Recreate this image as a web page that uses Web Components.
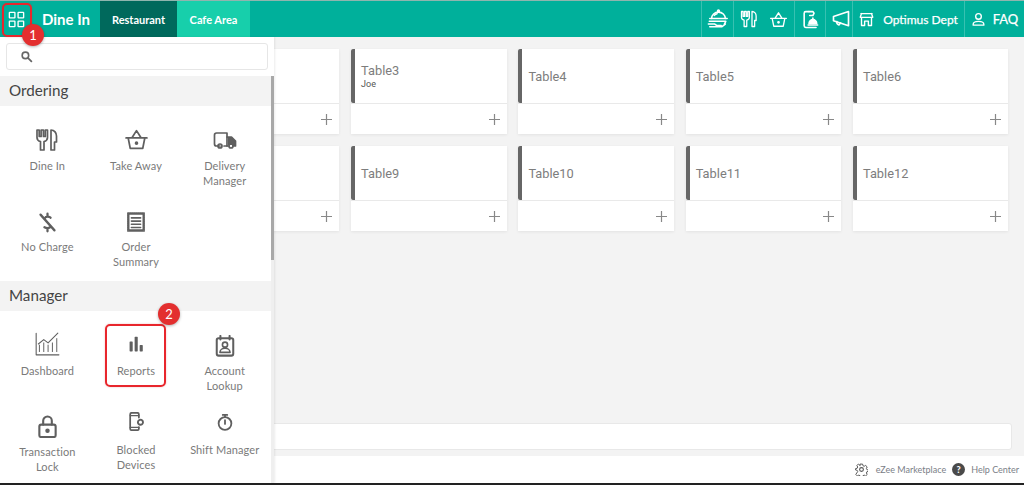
<!DOCTYPE html>
<html lang="en">
<head>
<meta charset="utf-8">
<title>Dine In</title>
<style>
  html, body { margin: 0; height: 485px; overflow: hidden; }
  body {
    position: relative;
    display: flex;
    flex-direction: column;
    background: #f3f3f3;
    font-family: "Lato", "Open Sans", sans-serif;
    box-sizing: border-box;
    border-bottom: 2px solid #222;
  }
</style>
</head>
<body>
<app-header>
  <nav-tab active style="width:77px">Restaurant</nav-tab>
  <nav-tab style="width:73px">Cafe Area</nav-tab>
  <head-cell slot="tools" style="width:32px"><app-icon name="cloche" size="22"></app-icon></head-cell>
  <head-cell slot="tools" style="width:61px;gap:11px"><app-icon name="dinein" size="18"></app-icon><app-icon name="basket" size="19"></app-icon></head-cell>
  <head-cell slot="tools" style="width:31px"><app-icon name="phonebell" size="19"></app-icon></head-cell>
  <head-cell slot="tools" style="width:27px;padding-left:3px"><app-icon name="megaphone" size="20"></app-icon></head-cell>
  <head-cell slot="tools" style="width:112px;gap:9px;font-size:12px"><app-icon name="store" size="15"></app-icon>Optimus Dept</head-cell>
  <head-cell slot="tools" style="width:60px;gap:7px"><app-icon name="user" size="15"></app-icon>FAQ</head-cell>
</app-header>

<table-floor>
  <table-card></table-card>
  <table-card></table-card>
  <table-card name="Table3" guest="Joe"></table-card>
  <table-card name="Table4"></table-card>
  <table-card name="Table5"></table-card>
  <table-card name="Table6"></table-card>
  <table-card></table-card>
  <table-card></table-card>
  <table-card name="Table9"></table-card>
  <table-card name="Table10"></table-card>
  <table-card name="Table11"></table-card>
  <table-card name="Table12"></table-card>
</table-floor>

<app-footer></app-footer>

<side-menu>
  <menu-section title="Ordering">
    <menu-item icon="dinein" size="24">Dine In</menu-item>
    <menu-item icon="basket" size="25">Take Away</menu-item>
    <menu-item icon="truck" size="24">Delivery Manager</menu-item>
    <menu-item icon="nocharge" size="21">No Charge</menu-item>
    <menu-item icon="receipt" size="22">Order Summary</menu-item>
  </menu-section>
  <menu-section title="Manager">
    <menu-item icon="chart" size="26">Dashboard</menu-item>
    <menu-item icon="bars" size="22">Reports</menu-item>
    <menu-item icon="account" size="22">Account Lookup</menu-item>
    <menu-item icon="lock" size="23">Transaction Lock</menu-item>
    <menu-item icon="device" size="19" lift>Blocked Devices</menu-item>
    <menu-item icon="watch" size="18" lift wide>Shift Manager</menu-item>
  </menu-section>
</side-menu>

<call-out n="1" style="--x:2px;--y:3px;--w:30px;--h:34px;--bx:33px;--by:35px"></call-out>
<call-out n="2" style="--x:105px;--y:324px;--w:61px;--h:63px;--bx:169px;--by:314px"></call-out>

<script>
const ICONS = {
  grid: '<rect x="3" y="3" width="7" height="7" rx=".6"/><rect x="14" y="3" width="7" height="7" rx=".6"/><rect x="3" y="14" width="7" height="7" rx=".6"/><rect x="14" y="14" width="7" height="7" rx=".6"/>',
  search: '<circle cx="10" cy="10" r="6" stroke-width="3"/><path d="M15 15l6 6" stroke-width="3.4"/>',
  cloche: '<path d="M5 11.500a7.500 7 0 0 1 15 0"/><circle cx="12.500" cy="3.200" r="1"/><path d="M3 11.500h19M8 8c.8-1 1.800-1.600 3-1.800M2.500 14.500h18l-1.500 3M1.500 17.500h7l2 1.500h5M3 20.500h13l4-3"/>',
  dinein: '<path d="M2 2v7.500c0 2 1.500 3.500 3.500 4V22H9v-8.500c2-.5 3.500-2 3.500-4V2h-2.200v6.500H8.400V2H6.100v6.500H4.200V2z"/><path d="M16 2v20h3.500v-8h2V8c0-3-2-6-5.500-6z"/>',
  basket: '<path d="M2 10.500h20M4 10.500l2 10h12l2-10M7.500 10.500L12 3.500l4.500 7"/><circle cx="12" cy="15.500" r=".9" fill="currentColor"/>',
  truck: '<path d="M7 18H3.500A2 2 0 0 1 1.500 16V7a2 2 0 0 1 2-2H14v13h-3"/><circle cx="7" cy="18" r="2"/><circle cx="18" cy="18" r="2"/><path d="M14 9h4.500l4 4v5h-2.500M15.500 18H14" fill="currentColor"/><path d="M15 10h3.500l3 3.500v3.500h-6.500z" fill="currentColor" stroke="none"/>',
  nocharge: '<path d="M4 3l16 18" stroke-width="2.600"/><path d="M15.500 6.500C14.500 5 10 4.500 9 7M15 17.500c-1.500 1-4 1.500-6.500 0M12 2v3M12 19v3" stroke-width="2.600"/>',
  receipt: '<path d="M3 2h18v20H3z" stroke-dasharray="1.500 .7" stroke-width="1.400"/><path d="M4 3.200h16v17.600H4zM7 7.500h10M7 11h10M7 14.500h10M7 18h10" stroke-width="1.800"/>',
  chart: '<path d="M2 2v20h21" stroke-width="1"/><path d="M5 19v-6M9 19v-8M13 19v-6M17 19v-8M21 19V7" stroke-width=".9"/><path d="M4 12l5-4 4 3 9-9" stroke-width="1"/>',
  bars: '<rect x="5" y="7" width="3.400" height="11" rx=".7" fill="currentColor" stroke="none"/><rect x="10.500" y="2" width="3.400" height="16" rx=".7" fill="currentColor" stroke="none"/><rect x="16" y="11" width="3.400" height="7" rx=".7" fill="currentColor" stroke="none"/>',
  account: '<rect x="3" y="3.500" width="18" height="19" rx="2" stroke-width="2.200"/><path d="M7 1v4M17 1v4" stroke-width="2.200"/><circle cx="12" cy="10.500" r="2.800" stroke-width="1.800"/><path d="M6.500 19c0-6 11-6 11 0z" stroke-width="1.800"/>',
  lock: '<rect x="3.500" y="10" width="17" height="13" rx="2" stroke-width="2.200"/><path d="M7.500 10V6a4.500 4.500 0 0 1 9 0v4" stroke-width="2.200"/><circle cx="12" cy="16.500" r="1.500" fill="currentColor"/>',
  device: '<path d="M15 7V3a2 2 0 0 0-2-2H6a2 2 0 0 0-2 2v18a2 2 0 0 0 2 2h7a2 2 0 0 0 2-2v-2" stroke-width="2.200"/><path d="M4 4.500h11M4 19.500h11" stroke-width="1.500"/><circle cx="17" cy="13" r="3.200" stroke-width="2.400" stroke-dasharray="2 .8"/>',
  watch: '<circle cx="12" cy="14" r="8.500" stroke-width="2.400"/><path d="M9 2.500h6M12 2.500v3M12 9.500v5" stroke-width="2.400"/>',
  phonebell: '<path d="M10 2H6a2 2 0 0 0-2 2v16a2 2 0 0 0 2 2h13" stroke-width="2"/><path d="M10 2h5l1.500 2-1.500 3h-4" stroke-width="2"/><path d="M10 17a5 5 0 0 1 10 0z" fill="currentColor"/><path d="M9 19h12M15 10v2" stroke-width="2"/>',
  megaphone: '<path d="M3 9v5l18 6V3z" stroke-width="2"/><path d="M7 15c-.5 2 .5 3.500 2.500 4l2-2.200" stroke-width="2"/>',
  store: '<path d="M3 2.500h18M2 8.500h20M4 2.500L2 8.500M20 2.500l2 6M4 8.500V21.500h5v-7h6v7h5v-13" stroke-width="2.200"/>',
  user: '<circle cx="12" cy="7" r="4.500" stroke-width="2.200"/><path d="M3.500 21v-1.500c0-3 3-4.500 8.500-4.500s8.500 1.500 8.500 4.500V21z" stroke-width="2.200"/>',
  gear: '<circle cx="12" cy="12" r="3.500" stroke-width="2"/><path d="M10 2h4l.7 3 2.300 1 2.700-1.500 2.800 2.800-1.500 2.700 1 2.300 3 .7v2.400l-3 .7-1 2.300 1.500 2.700-2.800 2.800-2.700-1.500-2.300 1-.7 3h-4l-.7-3-2.300-1-2.700 1.500-2.800-2.800L5 15.800l-1-2.300-3-.7v-2.400l3-.7 1-2.300-1.500-2.700 2.800-2.800L9 4.500z" stroke-width="1.800"/>'
};

class AppIcon extends HTMLElement {
  connectedCallback() {
    const size = this.getAttribute("size") || 24;
    const root = this.shadowRoot || this.attachShadow({ mode: "open" });
    root.innerHTML = `
      <style>
        :host { display: inline-flex; line-height: 0; flex: none; }
        svg { fill: none; stroke: currentColor; stroke-width: 1.7; stroke-linejoin: round; stroke-linecap: round; }
      </style>
      <svg width="${size}" height="${size}" viewBox="0 0 24 24">${ICONS[this.getAttribute("name")] || ""}</svg>`;
  }
}
customElements.define("app-icon", AppIcon);

class AppHeader extends HTMLElement {
  constructor() {
    super();
    this.attachShadow({ mode: "open" }).innerHTML = `
      <style>
        :host {
          display: flex;
          flex: none;
          box-sizing: border-box;
          height: 37px;
          background: #00b09b;
          border-top: 1px solid #8fb5ae;
          color: #fff;
        }
        .menu { display: flex; align-items: center; justify-content: center; width: 33px; }
        .title { display: flex; align-items: center; width: 67px; padding-left: 9px; box-sizing: border-box; font-size: 15px; font-weight: 700; }
        .tabs { display: flex; }
        .tools { display: flex; margin-left: auto; }
      </style>
      <div class="menu"><app-icon name="grid" size="19"></app-icon></div>
      <div class="title">Dine In</div>
      <div class="tabs"><slot></slot></div>
      <div class="tools"><slot name="tools"></slot></div>`;
  }
}
customElements.define("app-header", AppHeader);

class NavTab extends HTMLElement {
  constructor() {
    super();
    this.attachShadow({ mode: "open" }).innerHTML = `
      <style>
        :host {
          display: flex;
          align-items: center;
          justify-content: center;
          background: #17cfab;
          font-size: 11px;
          font-weight: 700;
        }
        :host([active]) { background: #00695c; }
      </style>
      <slot></slot>`;
  }
}
customElements.define("nav-tab", NavTab);

class HeadCell extends HTMLElement {
  constructor() {
    super();
    this.attachShadow({ mode: "open" }).innerHTML = `
      <style>
        :host {
          display: flex;
          align-items: center;
          justify-content: center;
          box-sizing: border-box;
          gap: 9px;
          border-left: 1px solid rgba(255,255,255,.22);
          font-size: 13px;
          -webkit-text-stroke: .25px #fff;
        }
      </style>
      <slot></slot>`;
  }
}
customElements.define("head-cell", HeadCell);

class TableFloor extends HTMLElement {
  constructor() {
    super();
    this.attachShadow({ mode: "open" }).innerHTML = `
      <style>
        :host {
          display: block;
          flex: 1;
          min-height: 0;
          padding: 12px 0 0 16.500px;
          position: relative;
        }
        .grid { display: grid; grid-template-columns: repeat(6, 155.500px); gap: 12px 11.800px; }
        .note {
          position: absolute;
          left: 17px;
          right: 12px;
          bottom: 6px;
          height: 27px;
          box-sizing: border-box;
          background: #fff;
          border: 1px solid #e8e8e8;
          border-radius: 3px;
        }
      </style>
      <div class="grid"><slot></slot></div>
      <div class="note"></div>`;
  }
}
customElements.define("table-floor", TableFloor);

class TableCard extends HTMLElement {
  constructor() {
    super();
    const name = this.getAttribute("name") || "";
    const guest = this.getAttribute("guest") || "";
    this.attachShadow({ mode: "open" }).innerHTML = `
      <style>
        :host {
          display: block;
          height: 85px;
          background: #fff;
          box-shadow: 0 1px 3px rgba(0,0,0,.07);
          font-family: "Roboto", sans-serif;
        }
        .top {
          box-sizing: border-box;
          height: 54px;
          border-left: 4px solid #666;
          border-radius: 2px 0 0 2px;
          padding-left: 6px;
          display: flex;
          flex-direction: column;
          justify-content: center;
          color: #7d7d7d;
          font-size: 12.800px;
          line-height: 15px;
        }
        .guest { font-size: 9px; color: #555; line-height: 11px; transform: translateY(1px); }
        .bottom {
          box-sizing: border-box;
          height: 31px;
          border-top: 1px solid #e9e9e9;
          display: flex;
          align-items: center;
          justify-content: flex-end;
          padding-right: 7px;
        }
      </style>
      <div class="top"><div>${name}</div>${guest ? `<div class="guest">${guest}</div>` : ""}</div>
      <div class="bottom"><svg width="11" height="11" viewBox="0 0 11 11"><path d="M5.500 0v11M0 5.500h11" stroke="#888" stroke-width="1.200"/></svg></div>`;
  }
}
customElements.define("table-card", TableCard);

class AppFooter extends HTMLElement {
  constructor() {
    super();
    this.attachShadow({ mode: "open" }).innerHTML = `
      <style>
        :host {
          display: flex;
          flex: none;
          align-items: center;
          justify-content: flex-end;
          height: 27px;
          padding-right: 5px;
          background: #fff;
          color: #7b8087;
          font-size: 9px;
        }
        app-icon { color: #555; }
        span { margin: 0 6px 0 8px; }
        .help {
          width: 13px; height: 13px; border-radius: 50%;
          background: #4a4a4a; color: #fff;
          font-size: 9px; font-weight: 900; line-height: 13px; text-align: center;
        }
      </style>
      <app-icon name="gear" size="13"></app-icon>
      <span>eZee Marketplace</span>
      <div class="help">?</div>
      <span style="margin-right:0;margin-left:6px">Help Center</span>`;
  }
}
customElements.define("app-footer", AppFooter);

class SideMenu extends HTMLElement {
  constructor() {
    super();
    this.attachShadow({ mode: "open" }).innerHTML = `
      <style>
        :host {
          position: absolute;
          left: 0;
          top: 37px;
          bottom: 0;
          width: 274px;
          display: flex;
          flex-direction: column;
          overflow: hidden;
          background: #fff;
          box-shadow: 1px 0 2px rgba(0,0,0,.08);
        }
        .search { padding: 6px; flex: none; display: flex; }
        .box {
          flex: 1;
          max-width: 262px;
          height: 27px;
          box-sizing: border-box;
          border: 1px solid #e6e6e6;
          border-radius: 3px;
          display: flex;
          align-items: center;
          padding-left: 13px;
          color: #666;
        }
        .body { flex: 1; min-height: 0; display: flex; }
        .list { flex: 1; min-width: 0; }
        .bar { flex: none; width: 3px; background: #efefef; }
        .thumb { height: 184px; background: #a8a8a8; }
      </style>
      <div class="search"><div class="box"><app-icon name="search" size="13"></app-icon></div></div>
      <div class="body">
        <div class="list"><slot></slot></div>
        <div class="bar"><div class="thumb"></div></div>
      </div>`;
  }
}
customElements.define("side-menu", SideMenu);

class MenuSection extends HTMLElement {
  constructor() {
    super();
    this.attachShadow({ mode: "open" }).innerHTML = `
      <style>
        :host { display: block; }
        h2 {
          margin: 0;
          height: 30px;
          padding-left: 9px;
          background: #f3f3f3;
          color: #444;
          font-size: 15.200px;
          font-weight: 400;
          line-height: 28px;
        }
        .items {
          display: grid;
          grid-template-columns: repeat(3, 88.700px);
          padding: 0 0 13px 3px;
        }
      </style>
      <h2>${this.getAttribute("title")}</h2>
      <div class="items"><slot></slot></div>`;
    this.removeAttribute("title");
  }
}
customElements.define("menu-section", MenuSection);

class MenuItem extends HTMLElement {
  constructor() {
    super();
    this.attachShadow({ mode: "open" }).innerHTML = `
      <style>
        :host {
          display: block;
          box-sizing: border-box;
          height: 81px;
          padding-top: 18px;
          text-align: center;
          color: #7a7a7a;
          font-size: 11px;
          letter-spacing: .1px;
          line-height: 15px;
        }
        .icon { height: 34px; display: flex; align-items: flex-end; justify-content: center; padding-bottom: 6px; box-sizing: border-box; color: #5f5f5f; }
        :host([lift]) .icon { height: 32px; padding-bottom: 11px; }
        .label { padding: 0 14px; }
        :host([wide]) .label { padding: 0; }
      </style>
      <div class="icon"><app-icon name="${this.getAttribute("icon")}" size="${this.getAttribute("size")}"></app-icon></div>
      <div class="label"><slot></slot></div>`;
  }
}
customElements.define("menu-item", MenuItem);

class CallOut extends HTMLElement {
  constructor() {
    super();
    this.attachShadow({ mode: "open" }).innerHTML = `
      <style>
        :host { position: absolute; left: 0; top: 0; }
        .box {
          position: absolute;
          left: var(--x); top: var(--y);
          width: var(--w); height: var(--h);
          box-sizing: border-box;
          border: 2px solid #e8262c;
          border-radius: 5px;
          box-shadow: 0 0 2px rgba(200,30,30,.3);
        }
        .dot {
          position: absolute;
          left: calc(var(--bx) - 11px); top: calc(var(--by) - 11px);
          width: 22px; height: 22px;
          border-radius: 50%;
          background: #e32f2f;
          box-shadow: 0 1px 3px rgba(0,0,0,.3);
          color: #fff;
          font: 400 13px/22px "Lato", sans-serif;
          text-align: center;
        }
      </style>
      <div class="box"></div>
      <div class="dot">${this.getAttribute("n")}</div>`;
  }
}
customElements.define("call-out", CallOut);
</script>
</body>
</html>
